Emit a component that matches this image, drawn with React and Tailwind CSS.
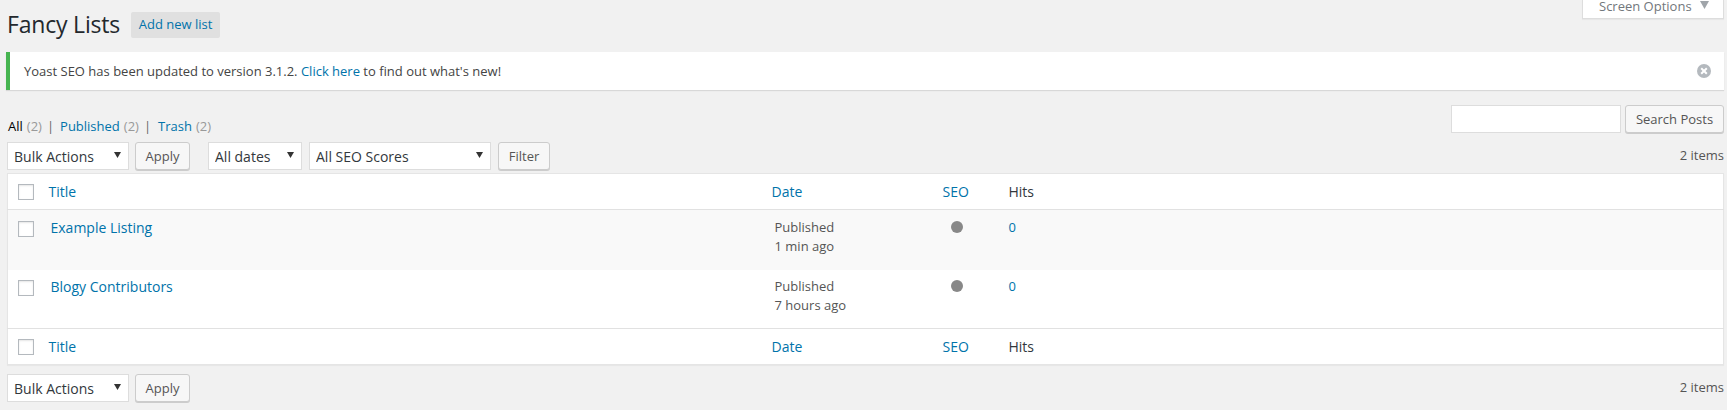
import React from "react";

const font = { fontFamily: '"Open Sans", sans-serif' };

function Check() {
  return <input type="checkbox" className="appearance-none block w-4 h-4 bg-white border border-[#b4b9be] shadow-[inset_0_1px_2px_rgba(0,0,0,0.1)]" />;
}

function Dropdown({ width, label }) {
  return (
    <div className={`relative h-7 ${width}`}>
      <select className="appearance-none w-full h-full bg-white border border-[#ddd] pl-[6px] text-[14px] text-[#32373c] outline-none">
        <option>{label}</option>
      </select>
      <svg className="absolute right-[8px] top-[10px] pointer-events-none" width="7" height="6" viewBox="0 0 7 6">
        <path d="M0 0h7L3.5 6z" fill="#333" />
      </svg>
    </div>
  );
}

function Btn({ children, width }) {
  return (
    <button className={`h-7 pt-px ${width} bg-[#f7f7f7] border border-[#ccc] rounded-[3px] shadow-[0_1px_0_#ccc] text-[13px] text-[#555]`}>
      {children}
    </button>
  );
}

function HeadRow({ foot }) {
  const cell = "h-[36px] p-0 font-normal text-left text-[14px] align-middle";
  const line = foot ? "border-t border-[#e1e1e1]" : "border-b border-[#e1e1e1]";
  return (
    <tr className={line}>
      <td className={cell}><div className="pl-[10px]"><Check /></div></td>
      <th className={`${cell} text-[#0073aa]`}>Title</th>
      <th className={`${cell} text-[#0073aa]`}>Date</th>
      <th className={`${cell} text-[#0073aa]`}>SEO</th>
      <th className={`${cell} text-[#32373c]`}>Hits</th>
    </tr>
  );
}

function Row({ title, ago, odd }) {
  // first row sits a pixel lower inside its cells than the second
  const text = odd ? "pt-[8px]" : "pt-[7px]";
  const box = odd ? "pt-[11px]" : "pt-[10px]";
  return (
    <tr className={odd ? "bg-[#f9f9f9] h-[60px]" : "bg-white h-[59px]"}>
      <td className={`p-0 pl-[10px] align-top ${box}`}><Check /></td>
      <td className={`p-0 pl-[2px] align-top text-[14px] font-medium text-[#0073aa] leading-[19px] ${text}`}>{title}</td>
      <td className={`p-0 pl-[3px] align-top text-[13px] leading-[19px] text-[#555] ${text}`}>
        <div>Published</div>
        <div>{ago}</div>
      </td>
      <td className={`p-0 pl-[8px] align-top ${box}`}>
        <div className="w-3 h-3 rounded-full bg-[#888]"></div>
      </td>
      <td className={`p-0 align-top text-[13px] leading-[19px] text-[#0073aa] ${text}`}>0</td>
    </tr>
  );
}

export default function App() {
  return (
    <div style={font} className="h-[410px] overflow-hidden bg-[#f1f1f1] pl-[7px] pr-[3px] text-[13px] text-[#444]">
      <div className="flex justify-between items-start h-[52px]">
        <div className="flex items-start">
          <h1 className="text-[23px] leading-[29px] mt-[10px] tracking-[-0.2px] text-[#23282d]">Fancy Lists</h1>
          <a className="ml-[11px] mt-[12px] w-[89px] h-[26px] flex items-center justify-center bg-[#e0e0e0] rounded-[2px] text-[13px] font-medium text-[#0073aa]">Add new list</a>
        </div>
        <div className="w-[142px] h-[19px] bg-white border border-t-0 border-[#ddd] shadow-[0_1px_1px_rgba(0,0,0,0.04)] flex items-start gap-[8px] pl-[16px] pt-px text-[13px] leading-[11px] text-[#72777c]">
          <span>Screen Options</span>
          <svg width="9" height="8" viewBox="0 0 9 8"><path d="M0 0h9L4.5 8z" fill="#a0a5aa" /></svg>
        </div>
      </div>

      <div className="-ml-px h-[38px] bg-white border-l-4 border-[#46b450] shadow-[0_1px_1px_rgba(0,0,0,0.1)] flex items-center justify-between pl-[14px] pr-[13px]">
        <p className="pt-px">Yoast SEO has been updated to version 3.1.2. <a className="text-[#0073aa]">Click here</a> to find out what's new!</p>
        <svg width="14" height="14" viewBox="0 0 14 14">
          <circle cx="7" cy="7" r="7" fill="#b4b9be" />
          <path d="M4.2 4.2l5.6 5.6M9.8 4.2l-5.6 5.6" stroke="#fff" strokeWidth="2" />
        </svg>
      </div>

      <div className="flex justify-between items-start mt-[15px] h-[37px]">
        <div className="pt-[12px] pl-px leading-[18px] flex">
          <span className="text-black">All</span>
          <span className="ml-[4px] text-[#999]">(2)</span>
          <span className="ml-[5px] text-[#666]">|</span>
          <span className="ml-[6px] text-[#0073aa]">Published</span>
          <span className="ml-[4px] text-[#999]">(2)</span>
          <span className="ml-[5px] text-[#666]">|</span>
          <span className="ml-[7px] text-[#0073aa]">Trash</span>
          <span className="ml-[4px] text-[#999]">(2)</span>
        </div>
        <div className="flex gap-[4px]">
          <input className="w-[170px] h-7 bg-white border border-[#ddd]" />
          <Btn width="w-[99px]">Search Posts</Btn>
        </div>
      </div>

      <div className="flex items-center h-7">
        <Dropdown width="w-[122px]" label="Bulk Actions" />
        <div className="ml-[6px]"><Btn width="w-[55px]">Apply</Btn></div>
        <div className="ml-[18px]"><Dropdown width="w-[94px]" label="All dates" /></div>
        <div className="ml-[7px]"><Dropdown width="w-[182px]" label="All SEO Scores" /></div>
        <div className="ml-[7px]"><Btn width="w-[52px]">Filter</Btn></div>
        <span className="ml-auto text-[#555]">2 items</span>
      </div>

      <table className="mt-[3px] w-[1717px] table-fixed border-collapse bg-white border border-[#e5e5e5] shadow-[0_1px_1px_rgba(0,0,0,0.04)]">
        <colgroup>
          <col className="w-[41px]" />
          <col className="w-[723px]" />
          <col className="w-[171px]" />
          <col className="w-[66px]" />
          <col />
        </colgroup>
        <thead><HeadRow /></thead>
        <tbody>
          <Row title="Example Listing" ago="1 min ago" odd />
          <Row title="Blogy Contributors" ago="7 hours ago" />
        </tbody>
        <tfoot><HeadRow foot /></tfoot>
      </table>

      <div className="flex items-center h-7 mt-[9px]">
        <Dropdown width="w-[122px]" label="Bulk Actions" />
        <div className="ml-[6px]"><Btn width="w-[55px]">Apply</Btn></div>
        <span className="ml-auto text-[#555]">2 items</span>
      </div>
    </div>
  );
}
